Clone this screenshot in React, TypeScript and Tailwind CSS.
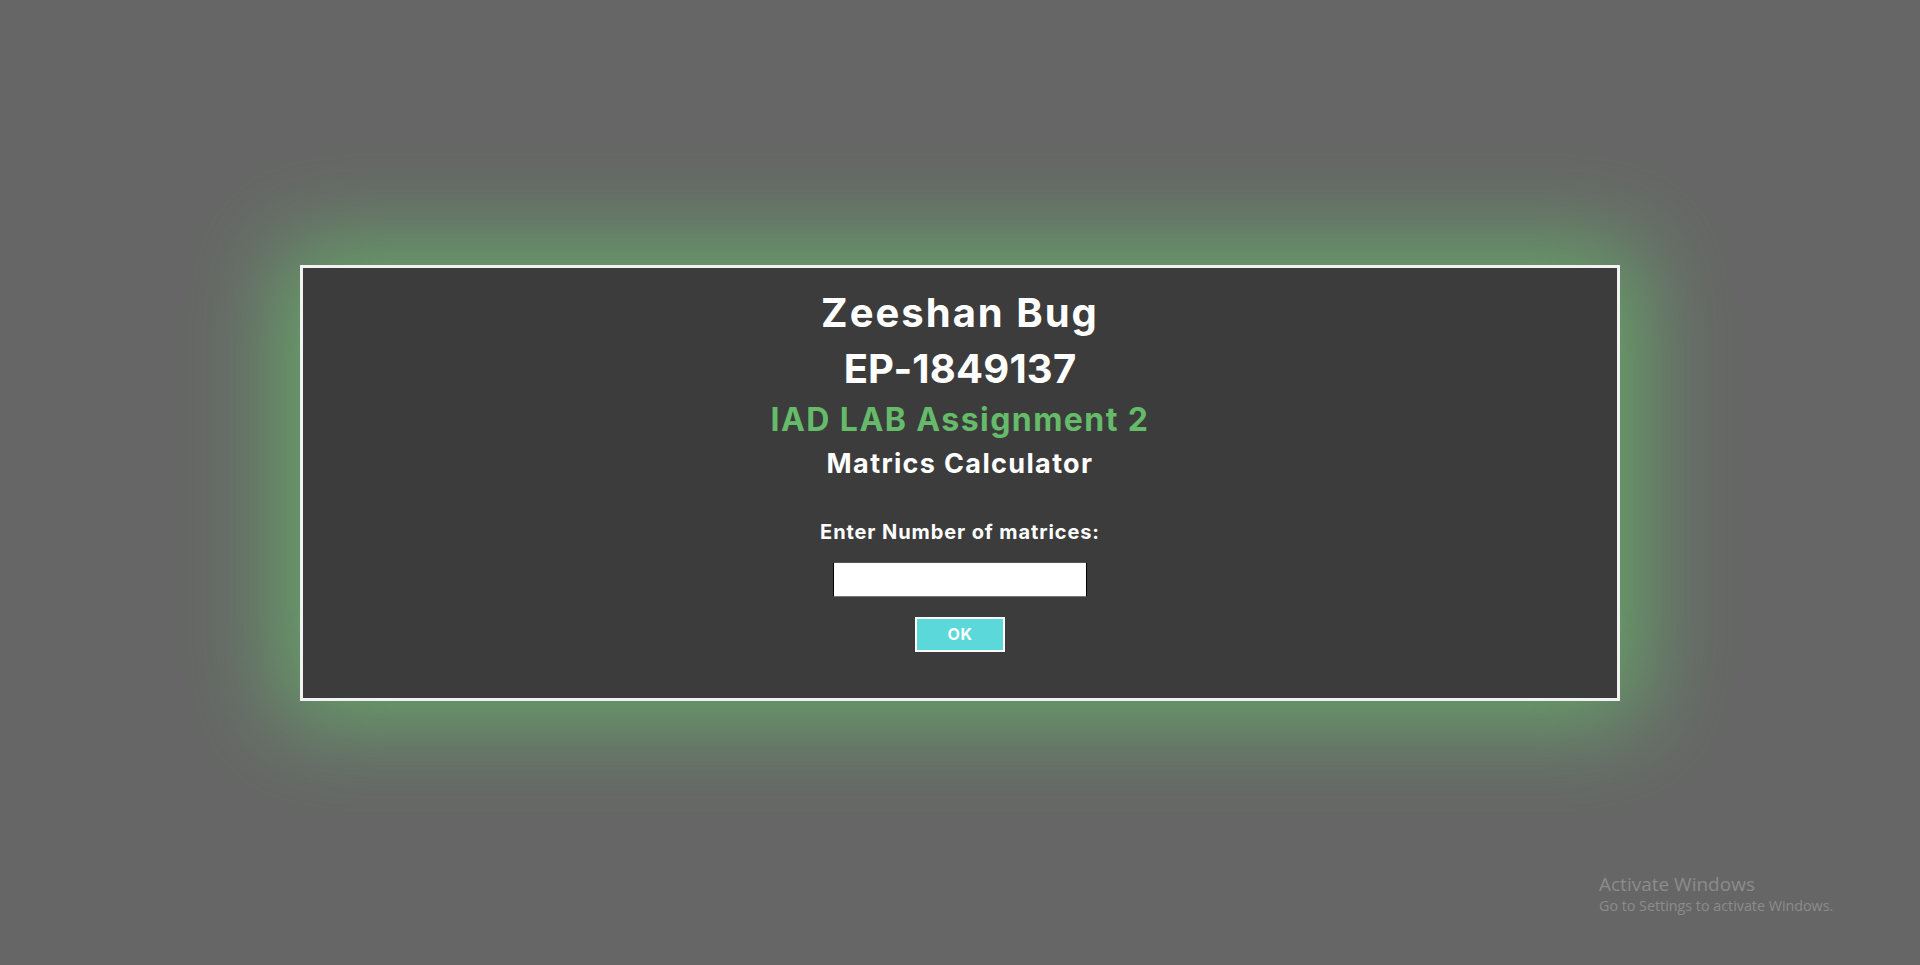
import React from "react";

export default function App() {
  return (
    <div className="relative min-h-screen w-full bg-[#666666] flex items-center justify-center overflow-hidden" style={{ fontFamily: "Inter, 'Open Sans', sans-serif" }}>
      <div className="w-[1320px] h-[436px] bg-[#3c3c3c] border-[3px] border-[#f2f2f2] shadow-[0_0_90px_20px_rgba(102,187,106,0.78)] flex flex-col items-center pt-[21px] text-white font-bold">
        <div className="text-[40px] leading-[48px] tracking-[0.05em]">Zeeshan Bug</div>
        <div className="text-[40px] leading-[48px] mt-[8px] tracking-[0.005em]">EP-1849137</div>
        <div className="text-[32px] leading-[40px] mt-[7px] text-[#66bb6a] tracking-[0.045em]">IAD LAB Assignment 2</div>
        <div className="text-[27px] leading-[36px] mt-[6px] tracking-[0.05em]">Matrics Calculator</div>
        <div className="text-[20px] leading-[28px] mt-[36px] tracking-[0.045em]">Enter Number of matrices:</div>
        <input
          type="text"
          className="mt-[16px] w-[254px] h-[35px] bg-white border border-black border-b-[#777777] border-t-[#555555] outline-none text-black px-1"
        />
        <button className="mt-[20px] w-[90px] h-[35px] bg-[#5ad8da] border-2 border-white text-white text-[16px] font-bold tracking-[0.04em]">
          OK
        </button>
      </div>
      <div className="absolute left-[1599px] top-[872px] text-[#8c8c8c]" style={{ fontFamily: "'Open Sans', 'Noto Sans', sans-serif" }}>
        <div className="text-[19px] leading-[24px]">Activate Windows</div>
        <div className="text-[14.3px] leading-[20px]">Go to Settings to activate Windows.</div>
      </div>
    </div>
  );
}
